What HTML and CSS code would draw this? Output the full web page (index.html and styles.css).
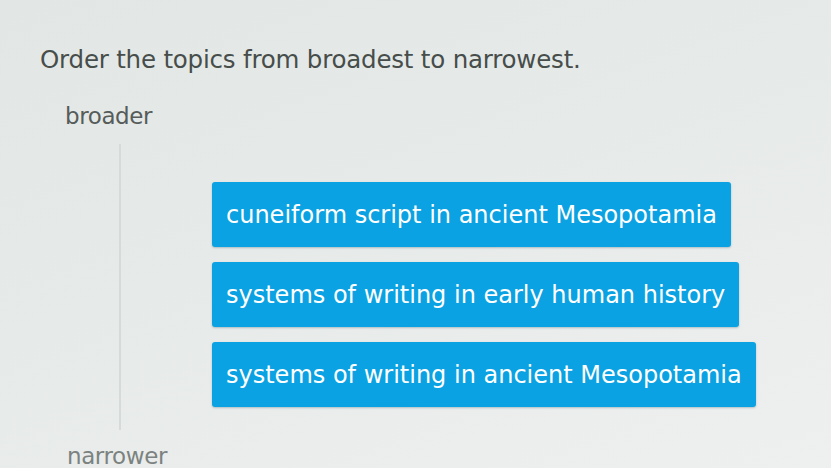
FILE: index.html
```html
<!DOCTYPE html>
<html lang="en">
<head>
  <meta charset="UTF-8" />
  <title>Order the topics</title>
  <link rel="stylesheet" href="styles.css">
</head>
<body>
  <main class="question">
    <h1 class="prompt">Order the topics from broadest to narrowest.</h1>

    <p class="scale-label">broader</p>

    <div class="order-area">
      <div class="track"></div>
      <ul class="tiles">
        <li class="tile">cuneiform script in ancient Mesopotamia</li>
        <li class="tile">systems of writing in early human history</li>
        <li class="tile">systems of writing in ancient Mesopotamia</li>
      </ul>
    </div>

    <p class="scale-label narrower">narrower</p>
  </main>
</body>
</html>
```

FILE: styles.css
```css
* {
  box-sizing: border-box;
}

html, body {
  height: 100%;
}

body {
  margin: 0;
  overflow: hidden;
  font-family: "DejaVu Sans", Verdana, sans-serif;
  background: linear-gradient(160deg, #e2e7e5 0%, #e6eae8 45%, #eef0ef 100%);
  color: #555c5a;
}

.question {
  padding: 45px 0 0 40px;
}

.prompt {
  margin: 0;
  font-size: 24.5px;
  line-height: 30px;
  font-weight: normal;
  color: #474d4b;
  letter-spacing: -0.2px;
}

.scale-label {
  margin: 27px 0 0 25px;
  font-size: 23px;
  line-height: 28px;
  color: #565c5a;
  letter-spacing: -0.4px;
}

.order-area {
  display: flex;
  margin-top: 14px;
}

.track {
  width: 2px;
  margin-left: 79px;
  height: 286px;
  background: #d6dbd9;
}

.tiles {
  list-style: none;
  margin: 38px 0 0 91px;
  padding: 0;
  display: flex;
  flex-direction: column;
  align-items: flex-start;
  gap: 15px;
}

.tile {
  background: #0aa2e2;
  color: #fff;
  font-size: 24px;
  height: 65px;
  display: flex;
  align-items: center;
  padding: 0 14px;
  border-radius: 3px;
  box-shadow: 0 1px 2px rgba(0, 60, 90, 0.25);
}

.narrower {
  margin-top: 12px;
  margin-left: 27px;
  color: #7b8280;
}
```
